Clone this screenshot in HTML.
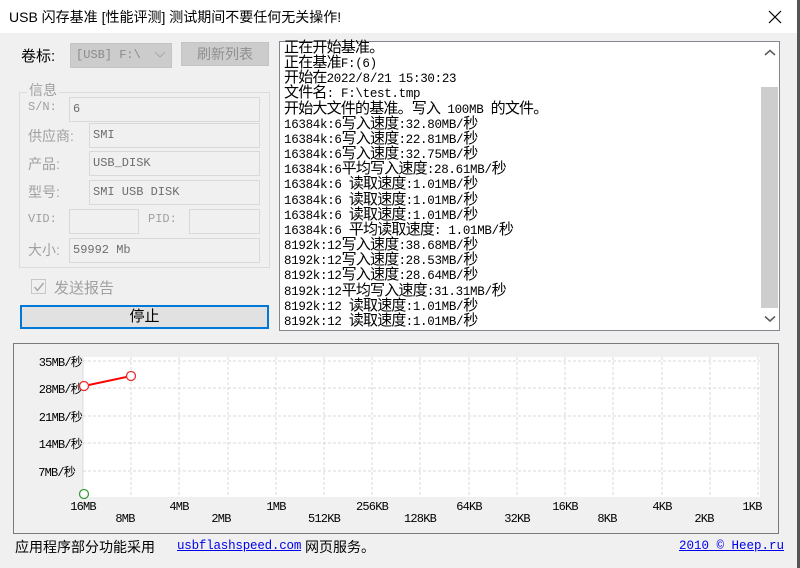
<!DOCTYPE html>
<html><head><meta charset="utf-8"><style>
*{margin:0;padding:0;box-sizing:border-box}
body{width:800px;height:568px;background:#f0f0f0;position:relative;overflow:hidden;font-family:"Liberation Sans","Noto Sans CJK SC",sans-serif;}
.a{position:absolute}
.title{left:0;top:0;width:797px;height:33px;background:#fff;}
.f{position:absolute;background:#f0f0f0;border:1px solid #d9d9d9;font-family:"Liberation Mono","Noto Sans CJK SC",monospace;font-size:12px;color:#6d6d6d;padding:2px 0 0 3px;}
.lb{position:absolute;color:#a0a0a0;font-size:14px;font-family:"Liberation Sans","Noto Sans CJK SC",sans-serif}
.log{left:279px;top:41px;width:501px;height:290px;background:#fff;border:1px solid #828790;}
.log pre{position:absolute;left:4px;top:0px;font-family:"Liberation Mono","Noto Sans CJK SC",monospace;font-size:12.5px;line-height:15.15px;color:#000;letter-spacing:-0.3px}
.log b{font-weight:normal;font-size:15px;line-height:10px;letter-spacing:-0.8px}
</style></head><body>
<div class="a" style="left:797px;top:0;width:3px;height:568px;background:#555"></div>
<div class="a title"></div>
<div class="a" style="left:9px;top:7px;font-size:14px;color:#000">USB 闪存基准 [性能评测] 测试期间不要任何无关操作!</div>
<svg class="a" style="left:768px;top:10px" width="14" height="14"><path d="M1 1L13 13M13 1L1 13" stroke="#000" stroke-width="1.2"/></svg>

<div class="a" style="left:21px;top:45px;font-size:15px;color:#000">卷标:</div>
<div class="a" style="left:70px;top:43px;width:102px;height:25px;background:#ccc;border:1px solid #c4c4c4;font-family:'Liberation Mono','Noto Sans CJK SC',monospace;font-size:12px;color:#8a8a8a;padding:4px 0 0 5px">[USB] F:\</div>
<svg class="a" style="left:154px;top:51px" width="12" height="8"><path d="M1 1L6 6L11 1" stroke="#aaa" fill="none"/></svg>
<div class="a" style="left:181px;top:42px;width:88px;height:24px;background:#ccc;border:1px solid #c4c4c4;font-size:14px;color:#8e8e8e;text-align:center;line-height:22px">刷新列表</div>

<div class="a" style="left:19px;top:92px;width:251px;height:176px;border:1px solid #dcdcdc"></div>
<div class="a lb" style="left:27px;top:80px;background:#f0f0f0;padding:0 2px">信息</div>
<div class="lb" style="left:28px;top:100px;font-family:'Liberation Mono',monospace;font-size:12px">S/N:</div>
<div class="f" style="left:69px;top:97px;width:191px;height:25px;padding-top:4px">6</div>
<div class="lb" style="left:28px;top:126px">供应商:</div>
<div class="f" style="left:89px;top:123px;width:171px;height:25px;padding-top:4px">SMI</div>
<div class="lb" style="left:28px;top:154px">产品:</div>
<div class="f" style="left:89px;top:151px;width:171px;height:25px;padding-top:4px">USB_DISK</div>
<div class="lb" style="left:28px;top:182px">型号:</div>
<div class="f" style="left:89px;top:180px;width:171px;height:25px;padding-top:4px">SMI USB DISK</div>
<div class="lb" style="left:28px;top:212px;font-family:'Liberation Mono',monospace;font-size:12px">VID:</div>
<div class="f" style="left:69px;top:209px;width:70px;height:25px"></div>
<div class="lb" style="left:148px;top:212px;font-family:'Liberation Mono',monospace;font-size:12px">PID:</div>
<div class="f" style="left:189px;top:209px;width:71px;height:25px"></div>
<div class="lb" style="left:28px;top:240px">大小:</div>
<div class="f" style="left:69px;top:238px;width:191px;height:25px;padding-top:4px">59992 Mb</div>

<div class="a" style="left:31px;top:279px;width:15px;height:15px;border:1px solid #c8c8c8;background:#f0f0f0"></div>
<svg class="a" style="left:33px;top:281px" width="12" height="12"><path d="M1.5 6L4.5 9.5L10.5 2" stroke="#a8a8a8" stroke-width="1.5" fill="none"/></svg>
<div class="lb" style="left:54px;top:277px;font-size:15px">发送报告</div>

<div class="a" style="left:20px;top:305px;width:249px;height:24px;background:#e1e1e1;border:2px solid #0078d7;font-size:15px;text-align:center;line-height:19px;color:#000">停止</div>

<div class="a log"><pre><b>正在开始基准。</b>
<b>正在基准</b>F:(6)
<b>开始在</b>2022/8/21 15:30:23
<b>文件名</b>: F:\test.tmp
<b>开始大文件的基准。写入</b> 100MB <b>的文件。</b>
16384k:6<b>写入速度</b>:32.80MB/<b>秒</b>
16384k:6<b>写入速度</b>:22.81MB/<b>秒</b>
16384k:6<b>写入速度</b>:32.75MB/<b>秒</b>
16384k:6<b>平均写入速度</b>:28.61MB/<b>秒</b>
16384k:6 <b>读取速度</b>:1.01MB/<b>秒</b>
16384k:6 <b>读取速度</b>:1.01MB/<b>秒</b>
16384k:6 <b>读取速度</b>:1.01MB/<b>秒</b>
16384k:6 <b>平均读取速度</b>: 1.01MB/<b>秒</b>
8192k:12<b>写入速度</b>:38.68MB/<b>秒</b>
8192k:12<b>写入速度</b>:28.53MB/<b>秒</b>
8192k:12<b>写入速度</b>:28.64MB/<b>秒</b>
8192k:12<b>平均写入速度</b>:31.31MB/<b>秒</b>
8192k:12 <b>读取速度</b>:1.01MB/<b>秒</b>
8192k:12 <b>读取速度</b>:1.01MB/<b>秒</b></pre>
<div class="a" style="left:481px;top:45px;width:17px;height:221px;background:#cdcdcd"></div>
<svg class="a" style="left:484px;top:7px" width="12" height="8"><path d="M1 6L6 1.5L11 6" stroke="#606060" stroke-width="1.6" fill="none"/></svg>
<svg class="a" style="left:484px;top:273px" width="12" height="8"><path d="M1 1.5L6 6L11 1.5" stroke="#606060" stroke-width="1.6" fill="none"/></svg>
</div>

<div class="a" style="left:13px;top:343px;width:766px;height:191px;border:1px solid #7a7a7a;background:#f0f0f0"></div>
<svg class="a" style="left:0;top:0" width="800" height="568" font-family="Liberation Mono, Noto Sans CJK SC, monospace" font-size="12" letter-spacing="-0.8">
<rect x="83" y="357" width="677" height="140" fill="#fff"/>
<g stroke="#d8d8d8" stroke-dasharray="3,2">
<line x1="83" y1="361" x2="760" y2="361"/><line x1="83" y1="388" x2="760" y2="388"/><line x1="83" y1="416" x2="760" y2="416"/><line x1="83" y1="443" x2="760" y2="443"/><line x1="83" y1="471" x2="760" y2="471"/>
<line x1="131" y1="357" x2="131" y2="497"/><line x1="179" y1="357" x2="179" y2="497"/><line x1="228" y1="357" x2="228" y2="497"/><line x1="276" y1="357" x2="276" y2="497"/><line x1="324" y1="357" x2="324" y2="497"/><line x1="372" y1="357" x2="372" y2="497"/><line x1="420" y1="357" x2="420" y2="497"/><line x1="469" y1="357" x2="469" y2="497"/><line x1="517" y1="357" x2="517" y2="497"/><line x1="565" y1="357" x2="565" y2="497"/><line x1="613" y1="357" x2="613" y2="497"/><line x1="662" y1="357" x2="662" y2="497"/><line x1="710" y1="357" x2="710" y2="497"/><line x1="758" y1="357" x2="758" y2="497"/>
</g>
<line x1="83" y1="357" x2="83" y2="497" stroke="#ddd"/>
<g fill="#000" text-anchor="end">
<text x="82" y="366">35MB/秒</text><text x="82" y="393">28MB/秒</text><text x="82" y="421">21MB/秒</text><text x="82" y="448">14MB/秒</text><text x="75" y="476">7MB/秒</text>
</g>
<g fill="#000" text-anchor="middle">
<text x="83" y="510">16MB</text><text x="179" y="510">4MB</text><text x="276" y="510">1MB</text><text x="372" y="510">256KB</text><text x="469" y="510">64KB</text><text x="565" y="510">16KB</text><text x="662" y="510">4KB</text><text x="752" y="510">1KB</text>
<text x="125" y="522">8MB</text><text x="221" y="522">2MB</text><text x="324" y="522">512KB</text><text x="420" y="522">128KB</text><text x="517" y="522">32KB</text><text x="607" y="522">8KB</text><text x="704" y="522">2KB</text>
</g>
<line x1="84" y1="386" x2="131" y2="376" stroke="#f00" stroke-width="2"/>
<circle cx="84" cy="386" r="4.5" fill="#fff" stroke="#e83030" stroke-width="1.3"/>
<circle cx="131" cy="376" r="4.5" fill="#fff" stroke="#e83030" stroke-width="1.3"/>
<circle cx="84" cy="494" r="4.5" fill="#fff" stroke="#3a9a3a" stroke-width="1.3"/>
</svg>

<div class="a" style="left:15px;top:537px;font-size:14px;color:#000">应用程序部分功能采用</div>
<div class="a" style="left:177px;top:539px;font-family:'Liberation Mono',monospace;font-size:12.5px;color:#0000ee;text-decoration:underline;letter-spacing:-0.2px">usbflashspeed.com</div>
<div class="a" style="left:305px;top:537px;font-size:14px;color:#000">网页服务。</div>
<div class="a" style="left:679px;top:539px;font-family:'Liberation Mono',monospace;font-size:12.5px;color:#0000ee;text-decoration:underline;letter-spacing:0px">2010 © Heep.ru</div>
</body></html>
